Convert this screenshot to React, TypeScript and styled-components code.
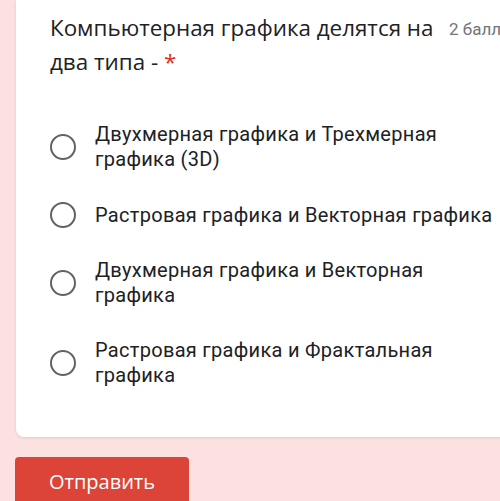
import styled, { createGlobalStyle } from 'styled-components';

const options = [
  'Двухмерная графика и Трехмерная графика (3D)',
  'Растровая графика и Векторная графика',
  'Двухмерная графика и Векторная графика',
  'Растровая графика и Фрактальная графика',
];

const App = () => {
  return (
    <Page>
      <GlobalStyle />
      <Card>
        <Header>
          <Title>
            Компьютерная графика делятся на два типа - <Required>*</Required>
          </Title>
          <Points>2 балла</Points>
        </Header>
        <OptionList>
          {options.map((text) => (
            <Option key={text}>
              <Radio />
              <Label>{text}</Label>
            </Option>
          ))}
        </OptionList>
      </Card>
      <SubmitBtn>Отправить</SubmitBtn>
    </Page>
  );
};

export default App;

const GlobalStyle = createGlobalStyle`
  body {
    margin: 0;
    background: #fbe2e1;
    overflow: hidden;
  }
`;

const Page = styled.div`
  width: 500px;
  height: 501px;
  overflow: hidden;
  padding-left: 16px;
  box-sizing: border-box;
`;

const Card = styled.div`
  width: 540px;
  background: #ffffff;
  border-radius: 0 0 0 8px;
  box-shadow: 0 1px 3px rgba(120, 80, 70, 0.18);
  padding: 11px 0 49px 34px;
  box-sizing: border-box;
`;

const Header = styled.div`
  display: flex;
  align-items: flex-start;
`;

const Title = styled.div`
  width: 388px;
  font-family: 'Open Sans', sans-serif;
  font-size: 22.4px;
  line-height: 34px;
  color: #202124;
`;

const Required = styled.span`
  color: #d93025;
`;

const Points = styled.div`
  margin-left: 11px;
  padding-top: 8px;
  font-family: Roboto, sans-serif;
  font-size: 17px;
  color: #70757a;
  white-space: nowrap;
`;

const OptionList = styled.div`
  display: flex;
  flex-direction: column;
  gap: 30px;
  margin-top: 43px;
`;

const Option = styled.div`
  display: flex;
  align-items: center;
  gap: 19px;
`;

const Radio = styled.div`
  width: 22px;
  height: 22px;
  border: 2.5px solid #5f6368;
  border-radius: 50%;
  flex-shrink: 0;
`;

const Label = styled.div`
  width: 406px;
  font-family: Roboto, sans-serif;
  font-size: 20px;
  letter-spacing: 0.3px;
  line-height: 25px;
  color: #202124;
`;

const SubmitBtn = styled.button`
  display: block;
  margin-top: 20px;
  margin-left: -1px;
  width: 174px;
  height: 48px;
  border: none;
  border-radius: 4px;
  background: #db4437;
  color: #ffffff;
  font-family: 'Open Sans', sans-serif;
  font-size: 20px;
  font-weight: 500;
  padding: 0;
`;
